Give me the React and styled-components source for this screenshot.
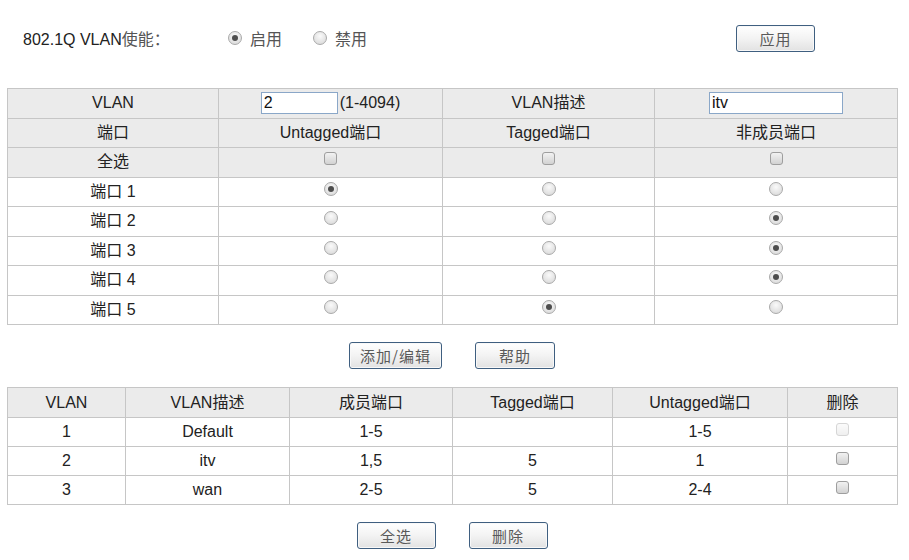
import React, { useState } from "react";
import styled, { createGlobalStyle } from "styled-components";

const GlobalStyle = createGlobalStyle`
  body {
    margin: 0;
    background: #fff;
    font-family: "Liberation Sans", Arial, "Noto Sans CJK SC", sans-serif;
    color: #222;
  }
`;

const Page = styled.div`
  width: 890px;
  padding: 0 0 0 7px;
`;

const TopBar = styled.div`
  display: flex;
  align-items: center;
  height: 52px;
  padding: 12px 0 0 16px;
  margin-bottom: 24px;
  font-size: 16px;
`;

const EnableLabel = styled.span`
  width: 205px;
  color: #222;
`;

const Cjk = styled.span`
  font-family: "Noto Sans CJK SC", sans-serif;
  color: #555;
`;

const RadioLabel = styled.label`
  display: flex;
  align-items: center;
  gap: 8px;
  width: 85px;
  color: #555;
  font-family: "Noto Sans CJK SC", sans-serif;
  font-size: 16px;
`;

const Spacer = styled.div`
  flex: 1;
`;

const Button = styled.button`
  width: ${(p) => p.$w || 80}px;
  height: 27px;
  border: 1px solid #3f5f80;
  border-radius: 3px;
  background: linear-gradient(#ffffff, #f3f3f3 50%, #e2e2e2);
  box-shadow: inset 0 0 0 1px #f8f8f8;
  color: #5a5a5a;
  font-family: "Noto Sans CJK SC", sans-serif;
  font-size: 15px;
  letter-spacing: 1px;
  padding: 0;
  cursor: pointer;
`;

const ApplyWrap = styled.div`
  margin-right: 82px;
`;

const Table = styled.table`
  width: 890px;
  border-collapse: collapse;
  table-layout: fixed;
  font-size: 16px;
  line-height: 18px;
  color: #222;
`;

const Row = styled.tr`
  height: ${(p) => p.$h || 29.5}px;
  background: ${(p) => (p.$shade ? "#ebebeb" : "#ffffff")};
`;

const Cell = styled.td`
  border: 1px solid #c6c6c6;
  text-align: center;
  padding: 0;
  white-space: nowrap;
  color: #222;
  vertical-align: middle;
`;

const ControlCell = styled(Cell)`
  vertical-align: top;
  padding-top: ${(p) => p.$top || 4}px;
`;

const TextInput = styled.input`
  width: ${(p) => p.$w}px;
  height: 22px;
  box-sizing: border-box;
  border: 1px solid #8aa7c8;
  padding: 0 2px;
  font-family: "Liberation Sans", Arial, sans-serif;
  font-size: 16px;
  color: #111;
  vertical-align: middle;
  background: #fff;
  outline: none;
`;

const Hint = styled.span`
  vertical-align: middle;
  margin-left: 2px;
`;

const RadioDot = styled.span`
  display: ${(p) => (p.$inline ? "inline-block" : "block")};
  margin: ${(p) => (p.$inline ? "0" : "0 auto")};
  box-sizing: border-box;
  width: 14px;
  height: 14px;
  border-radius: 50%;
  border: 1px solid #aaaaaa;
  background: radial-gradient(circle at 50% 35%, #fafafa, #dcdcdc 80%);
  position: relative;
  &::after {
    content: "";
    display: ${(p) => (p.$on ? "block" : "none")};
    position: absolute;
    left: 3px;
    top: 3px;
    width: 6px;
    height: 6px;
    border-radius: 50%;
    background: #4d4d4d;
  }
`;

const CheckBox = styled.span`
  display: block;
  margin: 0 auto;
  box-sizing: border-box;
  width: 13px;
  height: 13px;
  border-radius: 3px;
  border: 1px solid ${(p) => (p.$disabled ? "#d6d6d6" : "#9e9e9e")};
  background: ${(p) =>
    p.$disabled
      ? "linear-gradient(#fbfbfb, #efefef)"
      : "linear-gradient(#f2f2f2, #d2d2d2)"};
`;

const ButtonRow = styled.div`
  display: flex;
  justify-content: center;
  gap: 33px;
  padding: ${(p) => p.$pad};
  width: 890px;
`;

const ports = [
  { name: "端口 1", sel: 0 },
  { name: "端口 2", sel: 2 },
  { name: "端口 3", sel: 2 },
  { name: "端口 4", sel: 2 },
  { name: "端口 5", sel: 1 },
];

const vlans = [
  { id: "1", desc: "Default", member: "1-5", tagged: "", untagged: "1-5", locked: true },
  { id: "2", desc: "itv", member: "1,5", tagged: "5", untagged: "1" },
  { id: "3", desc: "wan", member: "2-5", tagged: "5", untagged: "2-4" },
];

const App = () => {
  const [enabled, setEnabled] = useState(true);

  return (
    <>
      <GlobalStyle />
      <Page>
        <TopBar>
          <EnableLabel>
            802.1Q VLAN<Cjk>使能：</Cjk>
          </EnableLabel>
          <RadioLabel onClick={() => setEnabled(true)}>
            <RadioDot $inline $on={enabled} />
            启用
          </RadioLabel>
          <RadioLabel onClick={() => setEnabled(false)}>
            <RadioDot $inline $on={!enabled} />
            禁用
          </RadioLabel>
          <Spacer />
          <ApplyWrap>
            <Button $w={79}>应用</Button>
          </ApplyWrap>
        </TopBar>

        <Table>
          <colgroup>
            <col style={{ width: 211 }} />
            <col style={{ width: 224 }} />
            <col style={{ width: 212 }} />
            <col style={{ width: 243 }} />
          </colgroup>
          <tbody>
            <Row $shade>
              <Cell>VLAN</Cell>
              <Cell>
                <TextInput $w={77} defaultValue="2" />
                <Hint>(1-4094)</Hint>
              </Cell>
              <Cell>VLAN描述</Cell>
              <Cell>
                <TextInput $w={134} defaultValue="itv" />
              </Cell>
            </Row>
            <Row $shade>
              <Cell>端口</Cell>
              <Cell>Untagged端口</Cell>
              <Cell>Tagged端口</Cell>
              <Cell>非成员端口</Cell>
            </Row>
            <Row $shade>
              <Cell>全选</Cell>
              <ControlCell><CheckBox /></ControlCell>
              <ControlCell><CheckBox /></ControlCell>
              <ControlCell><CheckBox /></ControlCell>
            </Row>
            {ports.map((p) => (
              <Row key={p.name}>
                <Cell>{p.name}</Cell>
                {[0, 1, 2].map((i) => (
                  <ControlCell key={i}>
                    <RadioDot $on={p.sel === i} />
                  </ControlCell>
                ))}
              </Row>
            ))}
          </tbody>
        </Table>

        <ButtonRow $pad="17px 0 18px">
          <Button $w={93}>添加/编辑</Button>
          <Button $w={80}>帮助</Button>
        </ButtonRow>

        <Table>
          <colgroup>
            <col style={{ width: 118 }} />
            <col style={{ width: 164 }} />
            <col style={{ width: 163 }} />
            <col style={{ width: 160 }} />
            <col style={{ width: 175 }} />
            <col style={{ width: 110 }} />
          </colgroup>
          <tbody>
            <Row $shade $h={30}>
              <Cell>VLAN</Cell>
              <Cell>VLAN描述</Cell>
              <Cell>成员端口</Cell>
              <Cell>Tagged端口</Cell>
              <Cell>Untagged端口</Cell>
              <Cell>删除</Cell>
            </Row>
            {vlans.map((v) => (
              <Row key={v.id} $h={29}>
                <Cell>{v.id}</Cell>
                <Cell>{v.desc}</Cell>
                <Cell>{v.member}</Cell>
                <Cell>{v.tagged}</Cell>
                <Cell>{v.untagged}</Cell>
                <ControlCell $top={5}>
                  <CheckBox $disabled={v.locked} />
                </ControlCell>
              </Row>
            ))}
          </tbody>
        </Table>

        <ButtonRow $pad="17px 0 0">
          <Button $w={79}>全选</Button>
          <Button $w={79}>删除</Button>
        </ButtonRow>
      </Page>
    </>
  );
};

export default App;
